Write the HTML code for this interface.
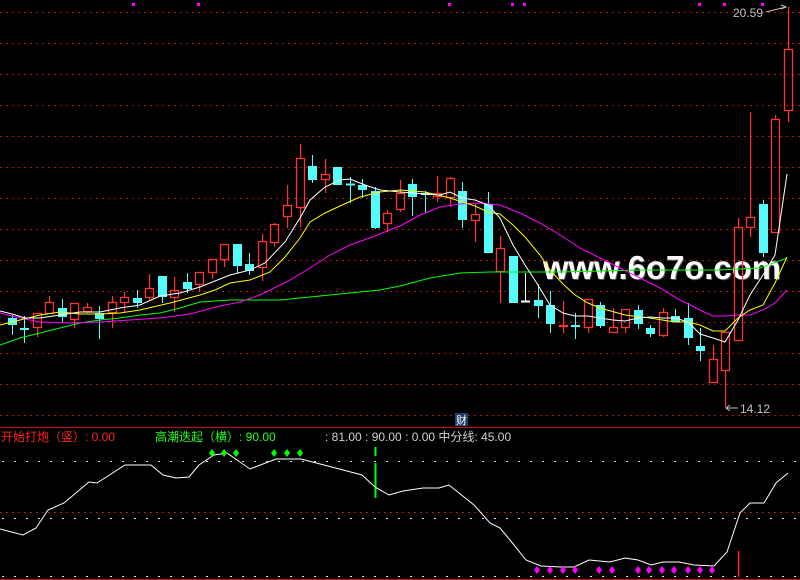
<!DOCTYPE html>
<html><head><meta charset="utf-8"><style>
html,body{margin:0;padding:0;background:#000;width:800px;height:580px;overflow:hidden}
svg{display:block}
text{font-family:"Liberation Sans","Noto Sans CJK SC",sans-serif}
</style></head><body>
<svg id="s" width="800" height="580" xmlns="http://www.w3.org/2000/svg">
<rect width="800" height="580" fill="#000"/>
<g id="grid"></g>
<text x="544" y="280" fill="#888" font-size="33" font-weight="bold" opacity="0.6" textLength="238" lengthAdjust="spacingAndGlyphs">www.6o7o.com</text>
<text x="543" y="279" fill="#fff" font-size="33" font-weight="bold" textLength="238" lengthAdjust="spacingAndGlyphs">www.6o7o.com</text>
<g id="c"></g>
<polyline fill="none" stroke="#00ff00" stroke-width="1" points="0,345 20,338 40,333 60,328 80,323 100,320 120,318 140,315 160,313 180,308 200,302 230,300 280,300 320,296 350,293 380,290 400,286 430,278 460,273 490,272 530,272 560,272 600,271 640,270 680,270 720,270 760,268 787,258"/>
<polyline fill="none" stroke="#ff00ff" stroke-width="1" points="0,313 20,318 40,322 70,323 100,322 130,320 160,318 190,314 220,306 240,302 260,295 290,280 310,268 330,255 350,245 375,236 400,226 420,215 440,207 460,204 480,203 500,205 520,213 540,223 560,235 580,248 600,258 620,268 640,278 660,288 680,300 700,310 713,316 725,316 738,315 750,315 763,310 775,303 787,290"/>
<polyline fill="none" stroke="#ffff00" stroke-width="1" points="0,325 20,320 40,315 60,312 80,314 100,314 120,313 140,310 170,303 200,295 215,290 230,283 250,280 270,272 285,257 300,238 310,222 325,213 340,206 360,197 380,192 400,190 425,192 450,198 475,206 488,212 500,214 513,225 525,237 540,255 550,270 563,284 575,295 588,303 600,308 625,315 650,318 675,322 688,322 700,325 713,331 725,331 738,318 750,310 763,305 775,283 787,257"/>
<polyline fill="none" stroke="#ffffff" stroke-width="1" points="0,311 12,314 25,318 40,318 60,315 80,312 100,312 120,308 140,305 160,296 180,293 200,287 215,281 230,275 250,270 265,263 285,242 300,218 310,200 325,187 340,180 350,179 365,185 380,190 400,192 425,194 440,195 450,192 462,198 475,200 488,205 500,218 513,245 525,265 538,285 550,305 563,313 575,316 588,316 600,318 613,320 625,321 638,318 650,317 663,318 675,318 688,322 700,334 713,338 725,342 738,320 750,295 763,275 775,255 787,174"/>
<g fill="#ff00ff"><rect x="132" y="3" width="3" height="3"/><rect x="197" y="3" width="3" height="3"/><rect x="448" y="3" width="3" height="3"/><rect x="511" y="3" width="3" height="3"/><rect x="523" y="3" width="3" height="3"/><rect x="698" y="3" width="3" height="3"/><rect x="723" y="3" width="3" height="3"/><rect x="761" y="3" width="3" height="3"/></g>
<text x="733" y="17" fill="#c0c0c0" font-size="12">20.59</text>
<polyline points="766,12 786,7" stroke="#c0c0c0" fill="none"/><polyline points="781,5 786,7 781,9" stroke="#c0c0c0" fill="none"/>
<polyline points="726,408 738,408" stroke="#c0c0c0"/><polyline points="730,405 726,408 730,411" stroke="#c0c0c0" fill="none"/>
<text x="740" y="413" fill="#c0c0c0" font-size="12">14.12</text>
<rect x="455" y="413" width="13" height="13" fill="#1c3e6e"/>
<text x="456" y="424" fill="#fff" font-size="11">财</text>
<line x1="0" y1="427.5" x2="800" y2="427.5" stroke="#c81010"/>
<line x1="0" y1="579.5" x2="800" y2="579.5" stroke="#c81010"/>
<text x="1" y="441" fill="#ff2020" font-size="12">开始打炮（竖）: 0.00</text>
<text x="155" y="441" fill="#20ff20" font-size="12">高潮迭起（横）: 90.00</text>
<text x="325" y="441" fill="#d0d0d0" font-size="12">: 81.00 : 90.00 : 0.00 中分线: 45.00</text>
<line x1="375.5" y1="447" x2="375.5" y2="456" stroke="#00ff00" stroke-width="2"/>
<line x1="375.5" y1="463" x2="375.5" y2="498" stroke="#00ff00" stroke-width="2"/>
<line x1="738.5" y1="551" x2="738.5" y2="577" stroke="#ff2020" stroke-width="1.5"/>
<polyline fill="none" stroke="#fff" stroke-width="1" points="0,529 23,535 36,528 48,510 64,503 89,482 97,483 125,465 151,465 163,475 176,478 189,477 199,465 214,455 227,453 250,469 276,459 301,459 324,465 347,471 362,475 375,487 389,495 403,491 423,488 439,488 449,485 474,505 490,523 500,528 510,540 526,560 541,566 561,567 574,567 589,560 610,562 625,558 638,560 651,565 663,562 679,562 694,565 714,566 727,552 740,513 750,503 764,503 776,483 788,473"/>
<g id="d"></g>
</svg>
<script>
var NS="http://www.w3.org/2000/svg";
function el(p,t,a){var e=document.createElementNS(NS,t);for(var k in a)e.setAttribute(k,a[k]);p.appendChild(e);return e;}
var g=document.getElementById('grid');
var ys=[12,43,74,105,136,167,198,229,260,291,322,353,384,415];
ys.forEach(function(y){el(g,'line',{x1:0,x2:800,y1:y+.5,y2:y+.5,stroke:'#b01010','stroke-dasharray':'2 4'});});
el(g,'line',{x1:0,x2:800,y1:512.5,y2:512.5,stroke:'#b01010','stroke-dasharray':'2 4'});
[461,518,576].forEach(function(y){el(g,'line',{x1:2,x2:800,y1:y+.5,y2:y+.5,stroke:'#ddd','stroke-dasharray':'2 10'});});
var C=[[12,318,325,315,335,'c'],[24,328,330,316,343,'c'],[37,313,327,313,337,'r'],[49,302,313,296,313,'r'],[62,308,317,299,323,'c'],[74,303,319,303,328,'r'],[87,307,311,303,313,'r'],[99,313,319,306,339,'c'],[112,302,312,296,328,'r'],[124,297,302,292,312,'r'],[137,298,303,290,308,'c'],[149,288,297,274,301,'r'],[162,276,297,276,303,'c'],[174,290,297,277,312,'r'],[187,282,289,273,293,'c'],[199,272,284,272,292,'r'],[212,259,272,259,279,'r'],[224,244,259,244,267,'r'],[237,244,266,244,273,'c'],[249,264,271,253,275,'c'],[262,241,267,234,281,'r'],[274,224,242,223,247,'r'],[287,205,216,185,228,'r'],[300,158,207,144,227,'r'],[312,166,180,155,183,'c'],[325,174,179,159,193,'r'],[337,167,185,167,185,'c'],[350,184,185,177,203,'c'],[362,185,190,179,198,'c'],[375,191,228,187,229,'c'],[387,213,223,210,232,'r'],[400,193,209,180,212,'r'],[412,184,197,179,216,'c'],[425,193,195,191,213,'c'],[437,193,196,176,202,'r'],[450,178,197,177,207,'r'],[462,191,220,182,228,'c'],[475,214,220,204,242,'r'],[488,204,253,192,253,'c'],[500,248,271,236,303,'r'],[513,256,303,256,303,'c'],[525,301,301,273,302,'w'],[538,300,306,284,318,'c'],[550,305,324,291,333,'c'],[563,325,325,301,333,'r'],[575,325,327,313,339,'c'],[588,299,327,299,333,'r'],[600,305,326,302,328,'c'],[613,327,332,308,332,'r'],[625,309,327,309,333,'r'],[638,310,324,305,329,'c'],[650,328,334,325,337,'c'],[663,312,335,308,337,'r'],[675,316,322,309,322,'c'],[688,318,338,303,345,'c'],[700,346,351,328,361,'c'],[713,359,382,345,382,'r'],[725,332,370,332,407,'r'],[738,227,340,218,341,'r'],[750,217,227,112,237,'r'],[763,204,253,200,257,'c'],[775,119,232,115,232,'r'],[788,49,110,7,122,'r']];
var cg=document.getElementById('c');
C.forEach(function(k){var x=k[0],t=k[1],b=k[2],h=k[3],l=k[4],ty=k[5];
 var col=ty=='r'?'#ff3232':(ty=='c'?'#54fcfc':'#ffffff');
 if(ty=='r'){
  el(cg,'rect',{x:x,y:h,width:1.2,height:Math.max(t-h,0),fill:col});
  el(cg,'rect',{x:x,y:b,width:1.2,height:Math.max(l-b,0),fill:col});
  el(cg,'rect',{x:x-4+.5,y:t+.5,width:8,height:Math.max(b-t,1),fill:'none',stroke:col,'stroke-width':1.3});
 } else {
  el(cg,'line',{x1:x+.5,x2:x+.5,y1:h,y2:l,stroke:col});
  if(b-t<2){el(cg,'line',{x1:x-4,x2:x+5,y1:t+.5,y2:t+.5,stroke:col,'stroke-width':2});}
  else{el(cg,'rect',{x:x-4,y:t,width:9,height:b-t,fill:col});}
 }
});
var dg=document.getElementById('d');
function dia(x,y,c){el(dg,'polygon',{points:(x)+','+(y-4)+' '+(x+3)+','+y+' '+x+','+(y+4)+' '+(x-3)+','+y,fill:c});}
[212,224,236,274,287,300].forEach(function(x){dia(x,453,'#00ff00');});
[537,550,563,575,599,612,638,649,662,674,688,700,712].forEach(function(x){dia(x,570,'#ff00ff');});
</script>
</body></html>
